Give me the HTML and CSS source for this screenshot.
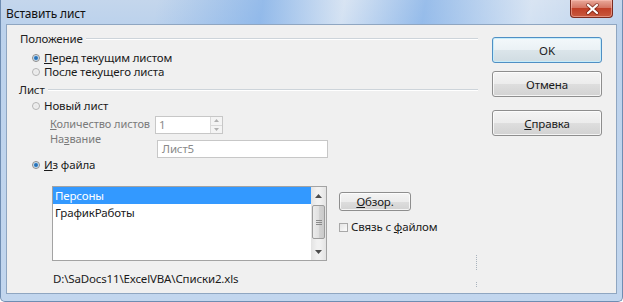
FILE: index.html
```html
<!DOCTYPE html>
<html lang="ru">

<head>
    <meta charset="UTF-8">
    <title>Вставить лист</title>
    <link rel="stylesheet" href="styles.css">
</head>

<body>
    <div class="window">
        <div class="titlebar">
            <span class="title">Вставить лист</span>
            <div class="close">
                <svg width="43" height="18" viewBox="0 0 43 18">
                    <path d="M17 5 L26 13 M26 5 L17 13" stroke="#5a1208" stroke-width="4" stroke-linecap="round" fill="none" opacity=".55" />
                    <path d="M17 5 L26 13 M26 5 L17 13" stroke="#ffffff" stroke-width="2.2" stroke-linecap="round" fill="none" />
                </svg>
            </div>
        </div>
        <div class="client">
            <div class="main">
                <div class="group-head head-pos"><span>Положение</span><i class="rule"></i></div>
                <div class="option opt-first"><span class="radio on"></span><span><u>П</u>еред текущим листом</span></div>
                <div class="option"><span class="radio"></span><span>После текущего листа</span></div>

                <div class="group-head head-sheet"><span>Лист</span><i class="rule"></i></div>
                <div class="option opt-new"><span class="radio"></span><span>Новый лист</span></div>
                <div class="new-fields">
                    <div class="field-labels">
                        <span><u>К</u>оличество листов</span>
                        <span>На<u>з</u>вание</span>
                    </div>
                    <div class="field-inputs">
                        <div class="spin">
                            <span class="spin-value">1</span>
                            <div class="spin-btns">
                                <span><svg width="5" height="3" viewBox="0 0 5 3"><path d="M0 3 L2.5 0 L5 3 Z" fill="#b0b0b0" /></svg></span>
                                <span><svg width="5" height="3" viewBox="0 0 5 3"><path d="M0 0 L2.5 3 L5 0 Z" fill="#b0b0b0" /></svg></span>
                            </div>
                        </div>
                        <div class="textbox">Лист5</div>
                    </div>
                </div>
                <div class="option opt-file"><span class="radio on"></span><span><u>И</u>з файла</span></div>

                <div class="file-row">
                    <div class="listbox">
                        <div class="list-items">
                            <div class="item selected">Персоны</div>
                            <div class="item">ГрафикРаботы</div>
                        </div>
                        <div class="scrollbar">
                            <div class="sb-btn"><svg width="7" height="4" viewBox="0 0 7 4"><path d="M0 4 L3.5 0 L7 4 Z" fill="#4d4d4d" /></svg></div>
                            <div class="sb-track">
                                <div class="sb-thumb"><i></i><i></i><i></i></div>
                            </div>
                            <div class="sb-btn"><svg width="7" height="4" viewBox="0 0 7 4"><path d="M0 0 L3.5 4 L7 0 Z" fill="#4d4d4d" /></svg></div>
                        </div>
                    </div>
                    <div class="file-side">
                        <div class="btn btn-browse"><span><u>О</u>бзор.</span></div>
                        <div class="check-row"><span class="checkbox"></span><span>Связь с <u>ф</u>айлом</span></div>
                    </div>
                </div>
                <div class="path">D:\SaDocs11\ExcelVBA\Списки2.xls</div>
            </div>

            <div class="actions">
                <div class="btn btn-default"><span>OK</span></div>
                <div class="btn"><span>Отмена</span></div>
                <div class="btn btn-help"><span><u>С</u>правка</span></div>
            </div>

            <span class="mark mark-a"></span>
            <span class="mark mark-b"></span>
        </div>
    </div>
</body>

</html>
```

FILE: styles.css
```css
body {
    margin: 0;
    font-family: "Noto Sans", "Open Sans", sans-serif;
    font-size: 11.5px;
    letter-spacing: -0.15px;
    color: #1a1a1a;
}

u {
    text-decoration-thickness: 1px;
    text-underline-offset: 1px;
}

.window {
    width: 623px;
    height: 302px;
    box-sizing: border-box;
    display: flex;
    flex-direction: column;
    padding: 0 5px 7px 5px;
    border: 1px solid #6f8db2;
    border-top: 0;
    border-radius: 0 0 5px 5px;
    white-space: nowrap;
    background:
        linear-gradient(100deg, rgba(255, 255, 255, 0) 25%, rgba(110, 165, 232, .55) 42%, rgba(255, 255, 255, .35) 55%, rgba(110, 165, 232, .5) 68%, rgba(255, 255, 255, .35) 85%, rgba(255, 255, 255, 0) 100%) top / 100% 24px no-repeat,
        linear-gradient(to bottom, #c4d6ec 0, #bcd2ec 24px, #c2d6ee 100%);
}

/* title bar */

.titlebar {
    height: 24px;
    display: flex;
    justify-content: space-between;
    align-items: flex-start;
}

.title {
    padding: 6px 0 0 0;
    line-height: 16px;
    font-size: 12px;
    color: #111;
}

.close {
    width: 43px;
    height: 18px;
    margin-right: 4px;
    box-sizing: border-box;
    border: 1px solid #7b2b1f;
    border-top: 0;
    border-radius: 0 0 4px 4px;
    background: linear-gradient(to bottom, #e9a99b 0, #d47563 45%, #c03f27 50%, #c85a3e 100%);
    box-shadow: inset 0 0 0 1px rgba(255, 200, 190, .5);
    font-size: 0;
}

/* client area */

.client {
    flex: 1;
    position: relative;
    display: flex;
    background: #f0f0f0;
    border: 1px solid #8fa6c1;
}

.main {
    width: 471px;
    box-sizing: border-box;
    padding-left: 12px;
    display: flex;
    flex-direction: column;
}

.group-head {
    display: flex;
    align-items: center;
    height: 16px;
    line-height: 16px;
    color: #222;
}

.head-pos {
    margin-top: 6px;
    padding-left: 1px;
}

.head-sheet {
    margin-top: 3px;
}

.rule {
    flex: 1;
    height: 0;
    margin-left: 3px;
    border-top: 1px solid #cdd4da;
    border-bottom: 1px solid #fff;
}

.option {
    display: flex;
    align-items: center;
    gap: 4px;
    height: 14px;
    line-height: 14px;
    margin-left: 13px;
}

.opt-first {
    margin-top: 4px;
}

.opt-new {
    margin-top: 1px;
}

.radio {
    width: 8px;
    height: 8px;
    flex: none;
    box-sizing: border-box;
    border-radius: 50%;
    border: 1px solid #b4b4b4;
    background: radial-gradient(circle, #e6e6e6 0, #f6f6f6 100%);
}

.radio.on {
    border-color: #8a8a8a;
    background: radial-gradient(circle, #1d5d9c 0, #3d86c9 1.6px, #cfe3f3 2.6px, #eeeeee 3px);
}

/* new sheet fields */

.new-fields {
    display: flex;
    margin: 3px 0 0 31px;
}

.field-labels {
    width: 105px;
    display: flex;
    flex-direction: column;
    font-size: 11px;
    letter-spacing: -0.1px;
    line-height: 15px;
    color: #7a7a7a;
}

.field-inputs {
    display: flex;
    flex-direction: column;
    gap: 6px;
}

.spin {
    width: 68px;
    height: 18px;
    box-sizing: border-box;
    display: flex;
    border: 1px solid #c7c7c7;
    background: #fff;
}

.spin-value {
    flex: 1;
    padding-left: 3px;
    line-height: 16px;
    color: #8a8a8a;
}

.spin-btns {
    width: 11px;
    display: flex;
    flex-direction: column;
    border-left: 1px solid #dadada;
}

.spin-btns span {
    flex: 1;
    display: flex;
    align-items: center;
    justify-content: center;
    background: #f4f4f4;
}

.spin-btns span+span {
    border-top: 1px solid #dadada;
}

.spin-btns svg {
    display: block;
}

.textbox {
    width: 171px;
    height: 18px;
    box-sizing: border-box;
    margin-left: 2px;
    padding-left: 4px;
    line-height: 16px;
    border: 1px solid #c7c7c7;
    background: #fff;
    color: #8a8a8a;
}

/* from file */

.file-row {
    display: flex;
    margin: 14px 0 0 33px;
}

.listbox {
    width: 275px;
    height: 75px;
    box-sizing: border-box;
    display: flex;
    border: 1px solid #a3a3a3;
    background: #fff;
}

.list-items {
    flex: 1;
}

.item {
    height: 17px;
    line-height: 17px;
    padding-left: 2px;
}

.item.selected {
    background: #3399ff;
    color: #fff;
}

.scrollbar {
    width: 15px;
    display: flex;
    flex-direction: column;
    background: linear-gradient(to right, #e3e3e3, #f1f1f1 40%, #f1f1f1 60%, #e3e3e3);
}

.sb-btn {
    height: 17px;
    display: flex;
    align-items: center;
    justify-content: center;
}

.sb-btn svg {
    display: block;
}

.sb-track {
    flex: 1;
    padding-top: 1px;
}

.sb-thumb {
    height: 34px;
    box-sizing: border-box;
    margin: 0 1px;
    border: 1px solid #9c9c9c;
    border-radius: 2px;
    background: linear-gradient(to right, #ececec, #e0e0e0 50%, #d3d3d3 51%, #cacaca);
    display: flex;
    flex-direction: column;
    align-items: center;
    justify-content: center;
    gap: 1px;
}

.sb-thumb i {
    width: 6px;
    height: 1px;
    background: #8a8a8a;
}

.file-side {
    margin-left: 12px;
    display: flex;
    flex-direction: column;
}

.check-row {
    display: flex;
    align-items: center;
    gap: 3px;
    height: 14px;
    margin-top: 9px;
    line-height: 14px;
}

.checkbox {
    width: 9px;
    height: 9px;
    flex: none;
    box-sizing: border-box;
    border: 1px solid #a8a8a8;
    background: linear-gradient(135deg, #e4e4e4, #fbfbfb);
}

.path {
    margin: 10px 0 0 34px;
    line-height: 16px;
}

/* buttons */

.btn {
    display: flex;
    align-items: center;
    justify-content: center;
    box-sizing: border-box;
    border: 1px solid #8e8e8e;
    border-radius: 3px;
    background: linear-gradient(to bottom, #f4f4f4 0, #ececec 50%, #dedede 51%, #d2d2d2 100%);
    box-shadow: inset 0 0 0 1px rgba(255, 255, 255, .75);
    color: #1a1a1a;
}

.btn-browse {
    width: 72px;
    height: 19px;
    margin-top: 6px;
}

.actions {
    width: 110px;
    margin-left: 14px;
    padding-top: 12px;
    display: flex;
    flex-direction: column;
    gap: 8px;
}

.actions .btn {
    height: 26px;
}

.btn-default {
    border-color: #4f8fc4;
    box-shadow: inset 0 0 0 1px #c6ecfa;
    background: linear-gradient(to bottom, #f3f8fb 0, #eaf1f5 50%, #dbe5ea 51%, #d0dce2 100%);
}

.actions .btn-help {
    margin-top: 5px;
}

.mark {
    position: absolute;
    left: 469px;
    width: 0;
    border-left: 1px dotted #a9b3bd;
}

.mark-a {
    top: 230px;
    height: 15px;
}

.mark-b {
    top: 257px;
    height: 5px;
}
```
